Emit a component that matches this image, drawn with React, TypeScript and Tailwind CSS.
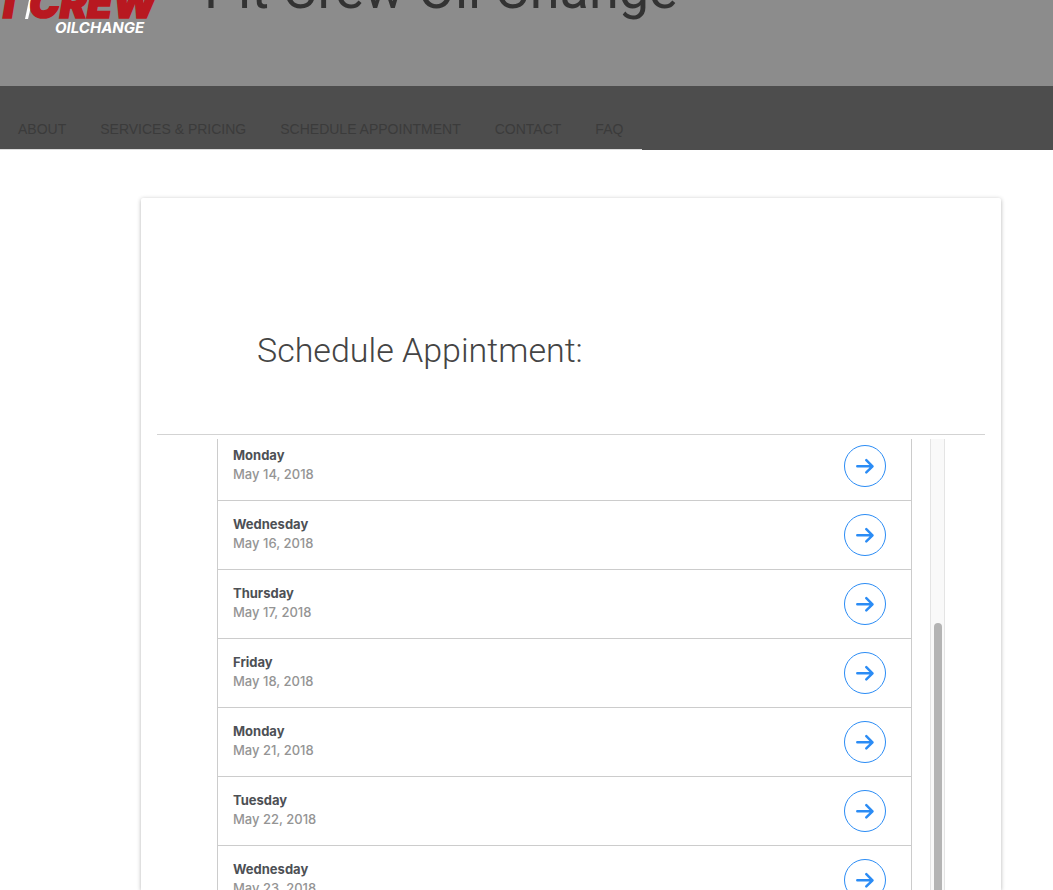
const navItems = ["ABOUT", "SERVICES & PRICING", "SCHEDULE APPOINTMENT", "CONTACT", "FAQ"];

const days = [
  { day: "Monday", date: "May 14, 2018" },
  { day: "Wednesday", date: "May 16, 2018" },
  { day: "Thursday", date: "May 17, 2018" },
  { day: "Friday", date: "May 18, 2018" },
  { day: "Monday", date: "May 21, 2018" },
  { day: "Tuesday", date: "May 22, 2018" },
  { day: "Wednesday", date: "May 23, 2018" },
];

function Logo() {
  return (
    <svg width="160" height="86" viewBox="0 0 160 86" className="shrink-0" role="img" aria-label="Pit Crew Oilchange">
      <text x="-5" y="18" fill="#b81820" stroke="#b81820" strokeWidth="1.6" className="font-['Inter',sans-serif] text-[41px] font-black italic">T</text>
      <path d="M29 0h3.5l-4.5 19h-3z" fill="#fff" />
      <text x="29" y="18" fill="#b81820" stroke="#b81820" strokeWidth="1.6" className="font-['Inter',sans-serif] text-[41px] font-black italic">CREW</text>
      <text x="55" y="33" fill="#fff" className="font-['Inter',sans-serif] text-[15px] font-bold italic">OILCHANGE</text>
    </svg>
  );
}

function ArrowIcon() {
  return (
    <svg width="20" height="20" viewBox="0 0 20 20" fill="none" stroke="#2b8cf5" strokeWidth="2.5" strokeLinecap="round" strokeLinejoin="round" aria-hidden="true">
      <path d="M2.3 10.3H17.4M11.3 4.2L17.5 10.3L11.3 16.4" />
    </svg>
  );
}

function DayRow({ day, date }: { day: string; date: string }) {
  return (
    <li className="flex h-[69px] items-center justify-between border-b border-[#ccc] pl-[15px] pr-[25px]">
      <div className="pb-0.5 font-['Inter',sans-serif] text-[13px] leading-[19px]">
        <p className="font-bold text-[#4d5055]">{day}</p>
        <p className="font-medium text-[#949494]">{date}</p>
      </div>
      <button type="button" aria-label={`Choose ${day}, ${date}`} className="flex size-[42px] items-center justify-center rounded-full border border-[#2b8cf5]">
        <ArrowIcon />
      </button>
    </li>
  );
}

export default function App() {
  return (
    <div className="flex h-screen flex-col overflow-hidden bg-white">
      <header className="flex h-[86px] shrink-0 gap-11 overflow-hidden bg-[#8c8c8c]">
        <Logo />
        <h1 className="-mt-12 whitespace-nowrap font-['Roboto',sans-serif] text-[54px] leading-[76px] text-[#333]">Pit Crew Oil Change</h1>
      </header>
      <nav className="flex h-16 shrink-0 bg-[#4d4d4d]">
        <div className="flex items-end gap-[34px] border-b border-[#ddd] pb-3 pl-[18px] pr-[19px] font-['Liberation_Sans',Arial,sans-serif] text-[14px] leading-4 text-[#3b3b3b]">
          {navItems.map((item) => (
            <a key={item} href="#" className="whitespace-nowrap">{item}</a>
          ))}
        </div>
      </nav>
      <main className="ml-[141px] mr-[52px] mt-12 flex min-h-0 grow flex-col rounded-t-xs px-4 shadow-[0_1px_4px_rgba(0,0,0,0.3)]">
        <h2 className="border-b border-[#d3d3d3] pb-[60px] pl-[100px] pt-[128px] font-['Roboto',sans-serif] text-[34px] font-light leading-[48px] text-[#444]">
          Schedule Appintment:
        </h2>
        <div className="ml-[60px] mr-10 mt-1 flex min-h-0 grow gap-[18px]">
          <div className="grow overflow-hidden border-x border-[#ccc]">
            <ul className="-mt-[7px]">
              {days.map((d) => (
                <DayRow key={d.date} day={d.day} date={d.date} />
              ))}
            </ul>
          </div>
          <div className="w-[15px] border-x border-[#e4e4e4] bg-[#f9f9f9] px-[3px] pt-[184px]">
            <div className="h-full w-2 rounded-t-full bg-[#b4b4b4]" />
          </div>
        </div>
      </main>
    </div>
  );
}
